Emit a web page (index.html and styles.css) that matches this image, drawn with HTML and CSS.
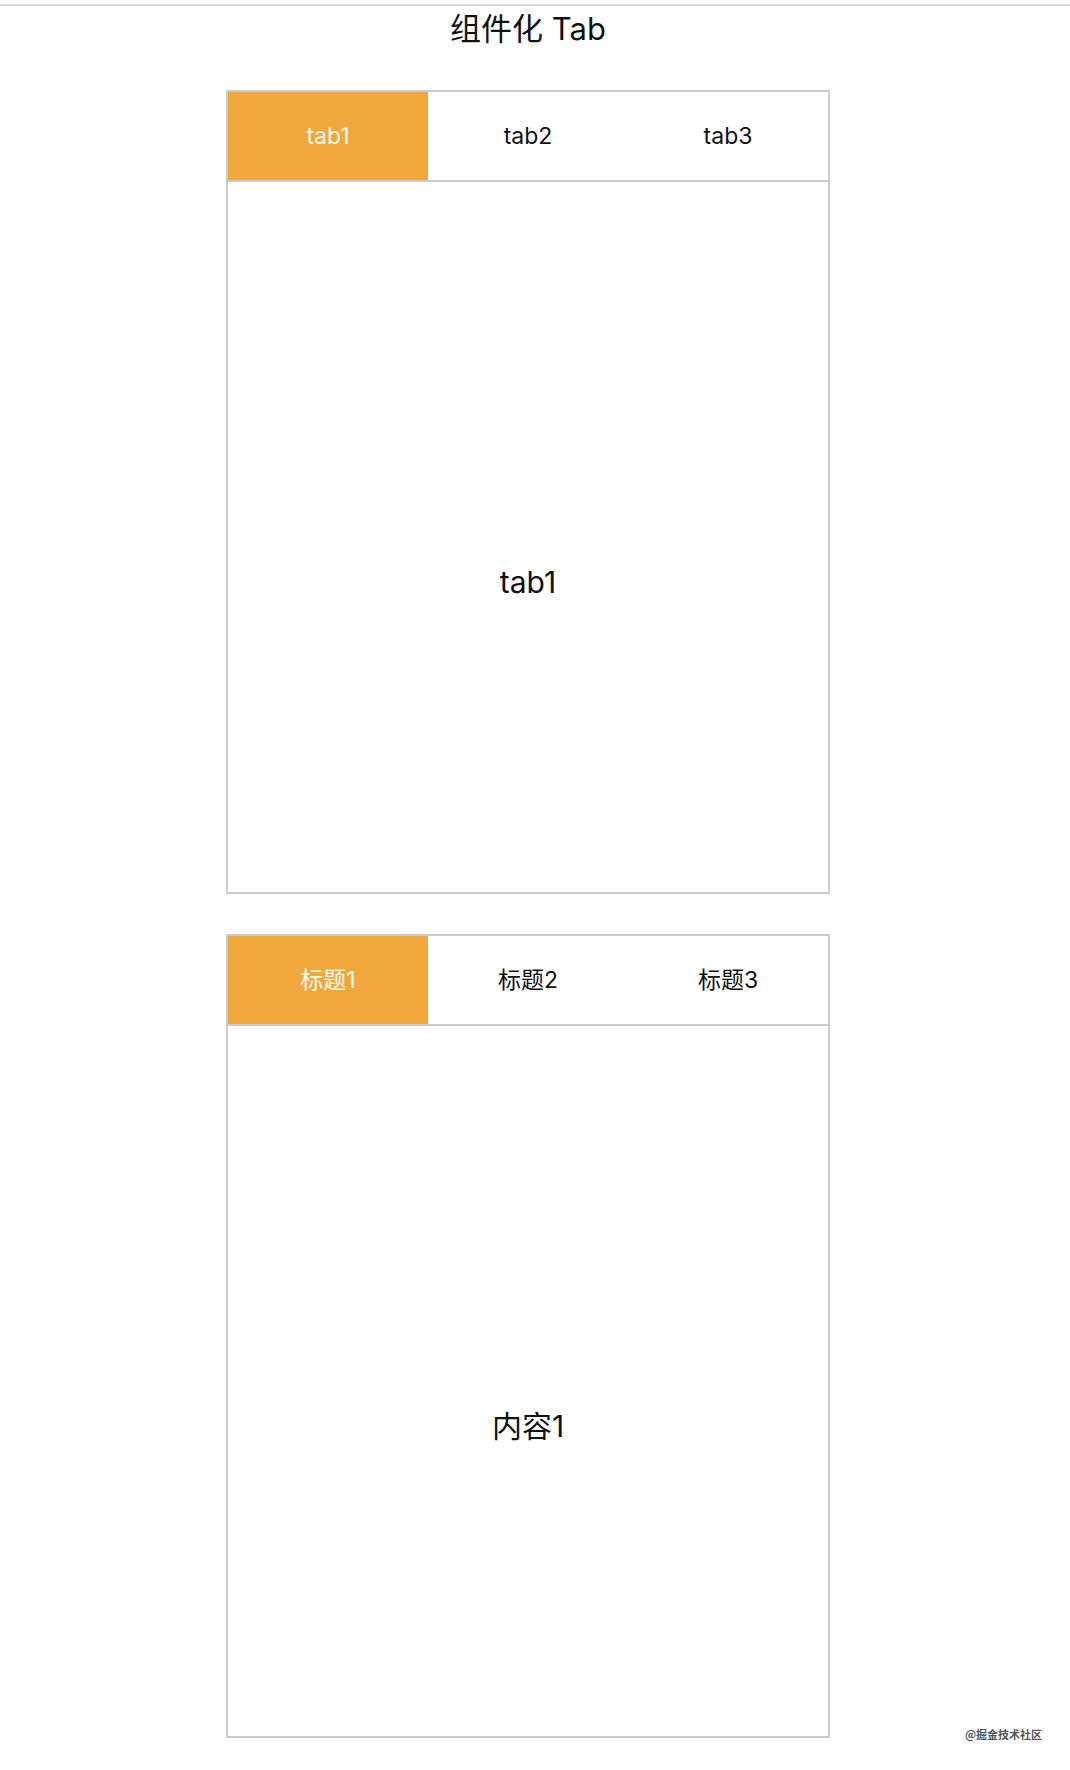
FILE: index.html
```html
<!DOCTYPE html>
<html lang="zh-CN">
<head>
<meta charset="utf-8">
<title>组件化 Tab</title>
<link rel="stylesheet" href="styles.css">
</head>
<body>
<div class="topline"></div>
<div class="page">
  <h1 class="title">组件化 Tab</h1>
  <div class="tabs">
    <div class="tabbar">
      <div class="tab active">tab1</div>
      <div class="tab">tab2</div>
      <div class="tab">tab3</div>
    </div>
    <div class="panel">tab1</div>
  </div>
  <div class="tabs">
    <div class="tabbar">
      <div class="tab active">标题1</div>
      <div class="tab">标题2</div>
      <div class="tab">标题3</div>
    </div>
    <div class="panel">内容1</div>
  </div>
</div>
<div class="watermark">@掘金技术社区</div>
</body>
</html>
```
FILE: styles.css
```css
html, body {
  margin: 0;
  padding: 0;
  background: #fff;
}
body {
  position: relative;
  min-height: 1770px;
  font-family: "Inter", "Noto Sans CJK SC", sans-serif;
  color: #111;
}
.topline {
  margin-top: 4px;
  height: 2px;
  background: #dcdcdc;
}
.page {
  width: 1056px;
  display: flex;
  flex-direction: column;
  align-items: center;
}
.title {
  margin: 3px 0 0;
  height: 81px;
  font-size: 31px;
  line-height: 40px;
  font-weight: 400;
  text-align: center;
  color: #111;
}
.tabs {
  width: 600px;
  border: 2px solid #cccccc;
  margin-bottom: 40px;
}
.tabbar {
  display: flex;
  border-bottom: 2px solid #cccccc;
}
.tab {
  width: 200px;
  height: 88px;
  line-height: 88px;
  text-align: center;
  font-size: 23px;
  color: #111;
}
.tab.active {
  background: #f0a83c;
  color: #fffaf0;
}
.panel {
  height: 710px;
  box-sizing: border-box;
  padding-top: 383px;
  line-height: 34px;
  font-size: 30px;
  text-align: center;
  color: #111;
}
.watermark {
  position: absolute;
  right: 28px;
  bottom: 37px;
  font-size: 11px;
  line-height: 14px;
  color: #555;
  font-weight: 700;
  font-family: "Noto Sans CJK SC", sans-serif;
}
```
